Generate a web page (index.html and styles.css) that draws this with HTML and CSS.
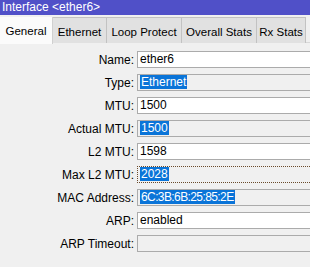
FILE: index.html
```html
<!DOCTYPE html>
<html lang="en">
<head>
    <meta charset="UTF-8">
    <title>Interface &lt;ether6&gt;</title>
    <link rel="stylesheet" href="styles.css">
</head>
<body>
    <div class="window">
        <div class="titlebar">Interface &lt;ether6&gt;</div>

        <div class="tabs">
            <div class="tab active" style="width: 53px">General</div>
            <div class="tab" style="width: 54px">Ethernet</div>
            <div class="tab" style="width: 75px">Loop Protect</div>
            <div class="tab" style="width: 75px">Overall Stats</div>
            <div class="tab" style="width: 49px">Rx Stats</div>
        </div>

        <div class="form">
            <div class="row">
                <span class="label">Name:</span>
                <span class="field">ether6</span>
            </div>
            <div class="row">
                <span class="label">Type:</span>
                <span class="field readonly"><span class="sel">Ethernet</span></span>
            </div>
            <div class="row">
                <span class="label">MTU:</span>
                <span class="field">1500</span>
            </div>
            <div class="row">
                <span class="label">Actual MTU:</span>
                <span class="field readonly"><span class="sel">1500</span></span>
            </div>
            <div class="row">
                <span class="label">L2 MTU:</span>
                <span class="field">1598</span>
            </div>
            <div class="row">
                <span class="label">Max L2 MTU:</span>
                <span class="field readonly focus"><span class="sel">2028</span></span>
            </div>
            <div class="row">
                <span class="label">MAC Address:</span>
                <span class="field readonly"><span class="sel mac">6C:3B:6B:25:85:2E</span></span>
            </div>
            <div class="row">
                <span class="label">ARP:</span>
                <span class="field">enabled</span>
            </div>
            <div class="row">
                <span class="label">ARP Timeout:</span>
                <span class="field readonly"></span>
            </div>
        </div>
    </div>
</body>
</html>
```

FILE: styles.css
```css
* {
    margin: 0;
    padding: 0;
    box-sizing: border-box;
}

body {
    font-family: "Liberation Sans", Arial, sans-serif;
    font-size: 11px;
    color: #000;
    background: #f0f0f0;
    overflow: hidden;
}

.window {
    width: 310px;
    height: 267px;
    overflow: hidden;
}

.titlebar {
    height: 15px;
    line-height: 15px;
    padding-left: 2px;
    background: #5050c8;
    color: #fff;
    font-size: 12px;
}

.tabs {
    display: flex;
    margin-top: 2px;
    height: 26px;
    border-bottom: 1px solid #d8d8d8;
}

.tab {
    height: 26px;
    line-height: 29px;
    text-align: center;
    font-size: 11.5px;
    background: #e1e1e1;
    border: 1px solid #c2c2c2;
    border-left: none;
    border-bottom: none;
}

.tab.active {
    background: #fbfbfb;
    height: 27px;
    border: none;
    border-right: 1px solid #d0d0d0;
}

.form {
    display: flex;
    flex-direction: column;
    gap: 6px;
    padding-top: 8px;
}

.row {
    display: flex;
    align-items: center;
    height: 17px;
}

.label {
    width: 137px;
    text-align: right;
    padding-right: 3px;
    font-size: 12px;
    white-space: nowrap;
}

.field {
    flex: 1;
    height: 17px;
    margin-right: -6px;
    line-height: 15px;
    padding-left: 2px;
    font-size: 12px;
    background: #fff;
    border: 1px solid #ababab;
    white-space: nowrap;
}

.field.readonly {
    background: #f0f0f0;
}

.field.focus {
    border: 1px dotted #6a4a2a;
}

.sel {
    display: inline-block;
    background: #0a74d8;
    color: #fff;
    line-height: 14px;
    padding: 0 1px;
}

.mac {
    letter-spacing: -0.6px;
}
```
